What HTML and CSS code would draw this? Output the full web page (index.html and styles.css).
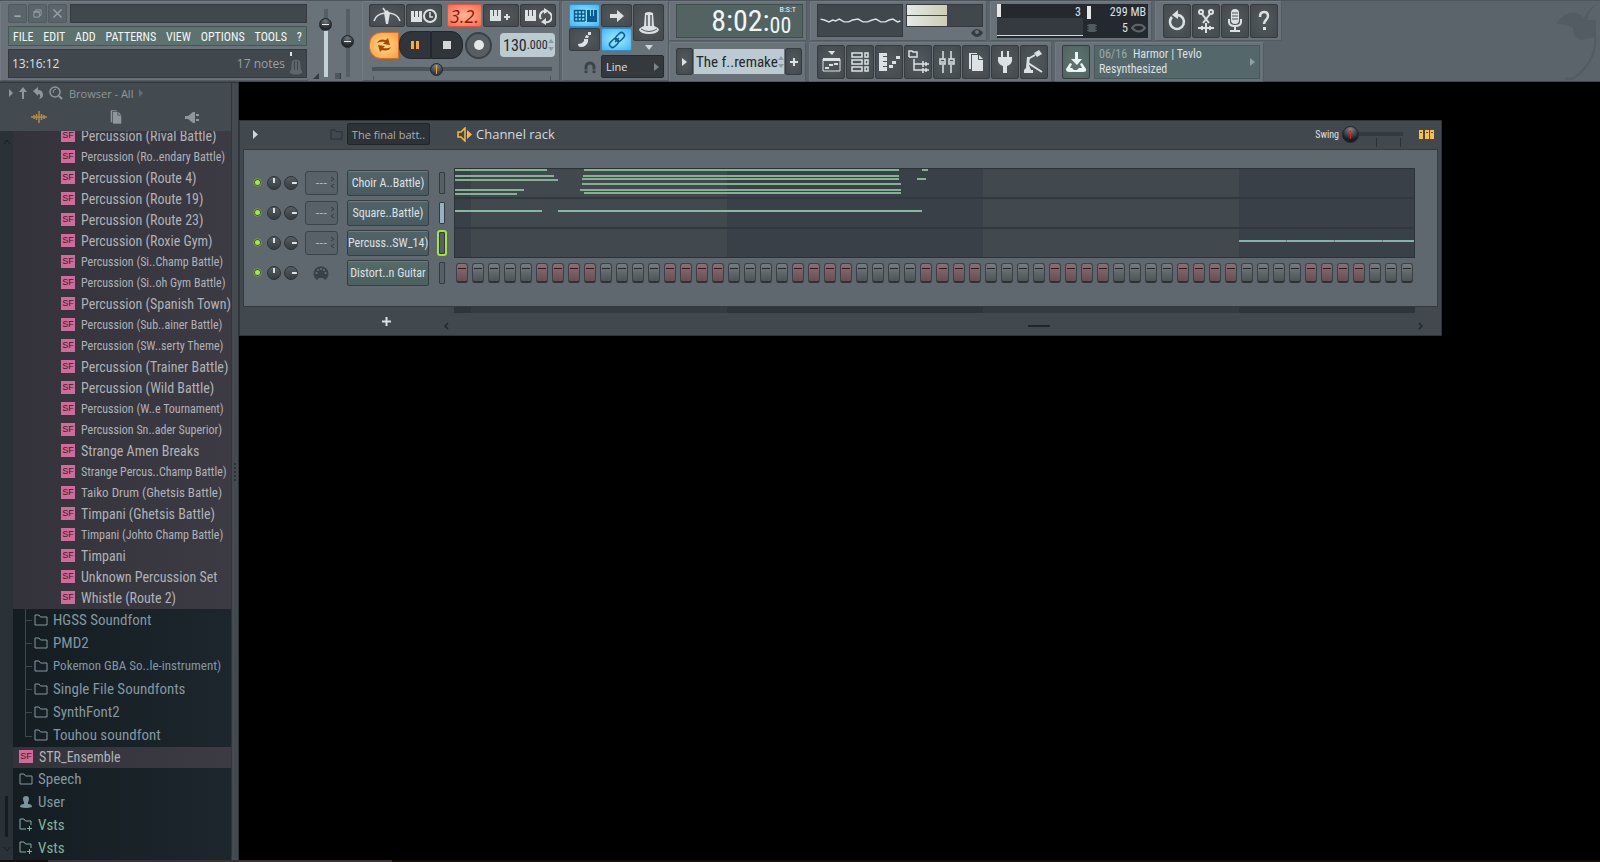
FILE: index.html
```
<!DOCTYPE html>
<html lang="en">
<head>
  <meta charset="UTF-8">
  <meta name="viewport" content="width=device-width, initial-scale=1.0">
  <title>FL Studio</title>
  <link rel="stylesheet" href="styles.css">
</head>
<body>
  <svg class="defs" aria-hidden="true">
    <symbol id="folder" viewBox="0 0 14 12">
      <path d="M1 11V1h4l1.500 2H13v8z" fill="none" stroke="currentColor"/>
    </symbol>
    <symbol id="folder-plus" viewBox="0 0 14 14">
      <path d="M7 11H1V1h4l1.500 2H12v4M10.500 8v5M8 10.500h5" fill="none" stroke="currentColor"/>
    </symbol>
    <symbol id="pages" viewBox="0 0 24 24">
      <path d="M5 19V3h8v1H7v15z"/>
      <path d="M8 5h6v5h5v11H8z"/>
      <path d="M15 5l4 4h-4z"/>
    </symbol>
    <symbol id="piano" viewBox="0 0 12 12">
      <path d="M0 0h3v6h1V0h3v6h1V0h3v11H0z"/>
    </symbol>
  </svg>

  <header class="toolbar">
    <div class="group main-group">
      <div class="title-row">
        <button class="win-button" aria-label="Minimize"><svg viewBox="0 0 19 19"><path d="M6 12.500h7" stroke="currentColor" stroke-width="2"/></svg></button>
        <button class="win-button" aria-label="Restore"><svg viewBox="0 0 19 19"><path d="M5.500 7.500h6v6h-6zM5 8h7M7.500 7V5.500h6v6H12" fill="none" stroke="currentColor"/></svg></button>
        <button class="win-button" aria-label="Close"><svg viewBox="0 0 19 19"><path d="M5 5l9 9M14 5l-9 9" stroke="currentColor" stroke-width="1.500"/></svg></button>
        <div class="title-box"></div>
      </div>
      <nav class="menu">
        <a href="#">FILE</a>
        <a href="#">EDIT</a>
        <a href="#">ADD</a>
        <a href="#">PATTERNS</a>
        <a href="#">VIEW</a>
        <a href="#">OPTIONS</a>
        <a href="#">TOOLS</a>
        <a href="#">?</a>
      </nav>
      <div class="hint">
        <span>13:16:12</span>
        <span class="hint-notes">17 notes</span>
        <svg width="14" height="24" viewBox="0 0 14 24"><path d="M1 0h2v4H1z" fill="#dfe5e6"/><path d="M3 9q4-3 8 0l1 9q2 1 1 3-6 3-12 0-1-2 1-3z" fill="#5f676d"/><path d="M5.500 9v9M8.500 9v9" stroke="#3f464c"/></svg>
      </div>
    </div>

    <div class="sliders">
      <div class="slider-box"><input type="range" class="fader fader-volume" value="84" aria-label="Main volume"><svg width="6" height="6"><path d="M6 0v6H0z" fill="#343a3f"/></svg></div>
      <div class="slider-box"><input type="range" class="fader" value="52" aria-label="Main pitch"><svg width="6" height="6"><path d="M0 1h6M0 3h6M0 5h6M5.500 0v6" stroke="#343a3f"/></svg></div>
    </div>

    <div class="group transport">
      <div class="row">
        <button class="btn" aria-label="Metronome"><svg width="28" height="18" viewBox="0 0 28 18" fill="none" stroke="currentColor" stroke-width="1.500"><path d="M1 14Q3 7 12 6M27 14Q25 7 16 6"/><path d="M14 3l3 3-2 11h-2L11 6z" fill="currentColor" stroke="none"/><path d="M14 7L10 1"/></svg></button>
        <button class="btn" aria-label="Wait for input"><svg width="28" height="18" viewBox="0 0 28 18"><use href="#piano" x="1" y="4" width="12" height="12"/><circle cx="20" cy="9" r="6" fill="#42484c" stroke="currentColor" stroke-width="2"/><path d="M20 5v5h3" fill="none" stroke="currentColor" stroke-width="1.500"/></svg></button>
        <button class="btn btn-countdown" aria-label="Countdown">3.2.</button>
        <button class="btn" aria-label="Overdub"><svg width="28" height="18" viewBox="0 0 28 18"><use href="#piano" x="3" y="3" width="12" height="12"/><path d="M20 7v6M17 10h6" stroke="currentColor" stroke-width="2"/></svg></button>
        <button class="btn" aria-label="Loop record"><svg width="28" height="18" viewBox="0 0 28 18"><use href="#piano" x="1" y="3" width="12" height="12"/><path d="M17 12a5 5 0 0 1 4-8M24 5a5 5 0 0 1-3 10" fill="none" stroke="currentColor" stroke-width="2"/><path d="M20 1l5 3-5 3zM22 11l-5 4 5 3z"/></svg></button>
      </div>
      <div class="row play-row">
        <button class="play-mode" aria-label="Pattern mode"><svg width="16" height="16" viewBox="0 0 16 16"><path d="M1 6Q3 1 10 3l2-2 2 7-7-1 2-2Q4 4 1 6zM15 10q-2 5-9 3l-2 2-2-7 7 1-2 2q5 1 8-1z" fill="#a84600"/></svg></button>
        <button class="pause" aria-label="Pause"><svg width="10" height="10"><path d="M1 1h3v8H1zM6 1h3v8H6z" fill="#ffa83c"/></svg></button>
        <button class="stop" aria-label="Stop"><svg width="8" height="8"><path d="M0 0h8v8H0z" fill="#d3d7d8"/></svg></button>
        <button class="record" aria-label="Record"><svg width="10" height="10"><circle cx="5" cy="5" r="5" fill="#e4e8e9"/></svg></button>
        <div class="tempo"><span class="tempo-main">130</span><span class="tempo-dec">.000</span><svg width="6" height="12"><path d="M0 4l3-4 3 4zM0 8l3 4 3-4z" fill="#8e9ba1"/></svg></div>
      </div>
      <input type="range" class="position" value="35" aria-label="Song position">
      <div class="position-ticks"></div>
    </div>

    <div class="group snap-group">
      <div class="snap-grid">
        <button class="btn btn-blue" aria-label="Typing keyboard"><svg width="24" height="14" viewBox="0 0 24 14"><path d="M1 1.500h11M1 5h11M1 8.500h11M1 12h11M1.500 1v11M5 1v11M8.500 1v11M12 1v11" stroke="#0d5a91" stroke-width="1.500"/><path d="M14 1h3v6h1V1h2v6h1V1h3v12H14z" fill="#0d5a91"/></svg></button>
        <button class="btn" aria-label="Step edit"><svg width="16" height="14" viewBox="0 0 16 14"><path d="M1 5h7V1l7 6-7 6V9H1z"/></svg></button>
        <button class="btn" aria-label="Note color"><svg width="18" height="18" viewBox="0 0 18 18"><path d="M2 13q4 0 6-3l0-2 4 0 0 3q-2 5-7 5-3 0-3-3z"/><path d="M9 7l1-3 3 1-1 2z"/><path d="M12 1h3v3h-3z"/></svg></button>
        <button class="btn btn-blue" aria-label="Link controllers"><svg width="18" height="18" viewBox="0 0 18 18" fill="none" stroke="#0d5a91" stroke-width="1.500"><rect x="7" y="3" width="10" height="6" rx="3" transform="rotate(-45 12 6)"/><rect x="1" y="9" width="10" height="6" rx="3" transform="rotate(-45 6 12)"/><path d="M7 11l4-4"/></svg></button>
      </div>
      <button class="btn knob-button" aria-label="Multilink"><svg width="24" height="26" viewBox="0 0 24 26"><path d="M8 3q4-2 8 0l1 13q5 2 5 4-2 4-10 4T2 20q0-2 5-4z"/><path d="M10 5v11M14 5v11" stroke="#54595d" stroke-width="1.500"/><path d="M4 19q8 5 16 0" fill="none" stroke="#54595d"/></svg></button>
      <svg class="snap-arrow" width="8" height="5"><path d="M0 0h8L4 5z" fill="#cfd4d6"/></svg>
      <div class="snap-row">
        <svg width="14" height="14" viewBox="0 0 14 14"><path d="M3 13V7a4 4 0 0 1 8 0v6" fill="none" stroke="#3d4449" stroke-width="3"/><path d="M1 10h12" stroke="#677076"/></svg>
        <button class="snap-select">Line <svg width="5" height="8"><path d="M0 0l5 4-5 4z" fill="#7d858a"/></svg></button>
      </div>
    </div>

    <div class="toolbar-right">
      <div class="toolbar-line">
        <div class="group">
          <div class="time">
            <span class="time-main">8:02:</span>
            <div class="time-side"><span class="time-mode">B:S:T</span><span class="time-sub">00</span></div>
          </div>
        </div>
        <div class="group scope-group">
          <svg class="scope" width="86" height="33" viewBox="0 0 86 33"><path d="M1 15l4 1 5 2 4-2 3 1 4-2 5 3 5 0 4-2 6-1 5 3 5 0 5-2 4-1 5 3 5 0 4-2 4-1 5 3 3-1" fill="none" stroke="#dde2e2" stroke-width="1.500"/></svg>
          <div class="meter-box">
            <div class="meter"><span></span><span></span></div>
            <svg width="12" height="10" viewBox="0 0 12 10"><path d="M0 5q6-8 12 0-6 8-12 0z" fill="#343b41"/><circle cx="6" cy="4" r="2" fill="#69727a"/></svg>
          </div>
        </div>
        <div class="group">
          <div class="cpu">
            <div class="cpu-graph"><span class="cpu-bar"></span><span>3</span></div>
            <div class="cpu-stats">
              <div class="cpu-memory"><span class="cpu-bar"></span><span>299 MB</span></div>
              <div class="cpu-voices"><svg width="10" height="8"><path d="M2 0h6v8H2zM0 1.500h10M0 4h10M0 6.500h10" fill="#525b60" stroke="#525b60"/></svg><span>5</span><svg width="15" height="10" viewBox="0 0 15 10"><path d="M1 5q3-4 6.500-3Q11 1 14 5q-6 7-13 0z" fill="none" stroke="#5c666b" stroke-width="2"/></svg></div>
            </div>
          </div>
        </div>
        <div class="group icon-row">
          <button class="btn tool" aria-label="Undo"><svg viewBox="0 0 24 24"><path d="M7 8a7 7 0 1 0 6-2" fill="none" stroke="currentColor" stroke-width="2.500"/><path d="M13 1v9L7 6z"/></svg></button>
          <button class="btn tool" aria-label="Cut"><svg viewBox="0 0 24 24" fill="none" stroke="currentColor" stroke-width="2"><path d="M8 5l7 9M16 5l-7 9"/><circle cx="7" cy="3" r="2"/><circle cx="17" cy="3" r="2"/><path d="M4 19h16M8 17v4M12 14v10M16 17v4"/></svg></button>
          <button class="btn tool" aria-label="Record audio"><svg viewBox="0 0 24 24"><rect x="8" y="0" width="8" height="15" rx="4"/><path d="M6 10v3q0 4 6 4t6-4v-3M12 17v4M7 22h10" fill="none" stroke="currentColor" stroke-width="2"/><path d="M9 4h6M9 7h6M9 10h6" stroke="#4b5155"/></svg></button>
          <button class="btn tool" aria-label="Help"><svg viewBox="0 0 24 24"><path d="M8 8q0-5 4-5t4 4q0 2-2 4t-2 4" fill="none" stroke="currentColor" stroke-width="2.500"/><path d="M11 18h3v3h-3z"/></svg></button>
        </div>
      </div>
      <div class="toolbar-line">
        <div class="group pattern-group">
          <button class="btn pattern-button" aria-label="Pattern menu"><svg width="5" height="8"><path d="M0 0l5 4-5 4z"/></svg></button>
          <div class="pattern-name"><span>The f..remake</span><svg width="6" height="12"><path d="M0 4l3-4 3 4zM0 8l3 4 3-4z" fill="#8e9ba1"/></svg></div>
          <button class="btn pattern-button" aria-label="Add pattern"><svg width="8" height="8"><path d="M4 0v8M0 4h8" stroke="currentColor" stroke-width="2"/></svg></button>
        </div>
        <div class="group icon-row">
          <button class="btn tool" aria-label="Playlist"><svg viewBox="0 0 24 24"><path d="M9 1h7l-3 4z"/><path d="M4 9h17v12H4z" fill="none" stroke="currentColor"/><path d="M4 8h17v3H4zM6 17h4v2H6zM10 14h4v2h-4zM15 13h4v2h-4z"/></svg></button>
          <button class="btn tool" aria-label="Channel rack"><svg viewBox="0 0 24 24" fill="none" stroke="currentColor" stroke-width="1.500"><path d="M4 3h10v4H4zM4 10h10v4H4zM4 17h10v4H4zM17 3h3v4h-3zM17 10h3v4h-3zM17 17h3v4h-3z"/></svg></button>
          <button class="btn tool" aria-label="Piano roll"><svg viewBox="0 0 24 24"><path d="M2 3h8v3H6v1h4v4H6v1h4v4H6v1h4v4H2zM12 15h4v3h-4zM15 11h4v3h-4zM19 6h4v3h-4z"/></svg></button>
          <button class="btn tool" aria-label="Browser"><svg viewBox="0 0 24 24"><path d="M3 7V1h3l1 1h4v5H3M8 9v11h6M8 14h6" fill="none" stroke="currentColor" stroke-width="1.500"/><path d="M14 14h9M14 20h9M17 11v6M20 12v4M17 18v5M20 18v4" stroke="currentColor" stroke-width="1.500"/></svg></button>
          <button class="btn tool" aria-label="Mixer"><svg viewBox="0 0 24 24" fill="none" stroke="currentColor" stroke-width="1.500"><path d="M8 1v8M8 15v8M16 1v8M16 15v8M5 9h5v5H5zM14 9h5v5h-5zM6 12h3M15 12h3"/></svg></button>
          <button class="btn tool" aria-label="Project files"><svg><use href="#pages"/></svg></button>
          <button class="btn tool" aria-label="Plugins"><svg viewBox="0 0 24 24"><path d="M8 1h2v6h4V1h2v6h3v4q-1 4-5 5v7h-4v-7q-4-1-5-5V7h3z"/></svg></button>
          <button class="btn tool" aria-label="Tempo tapper"><svg viewBox="0 0 24 24"><path d="M12 3l5-3 3 4-5 3z"/><path d="M13 5L6 9M6 13l14 9" fill="none" stroke="currentColor" stroke-width="2"/><path d="M5 7h3l-1 8 2 5h2v3H2v-3l2-2z"/></svg></button>
        </div>
        <div class="group news-group">
          <button class="btn tool tool-green" aria-label="Download"><svg viewBox="0 0 24 24"><path d="M11 2h3v7h4l-5 6-6-6h4z"/><path d="M6 13l-4 6q0 3 3 3h14q4 0 3-3l-4-6-2 1 2 4h-3l-2 2h-3l-2-2H6l2-4z"/></svg></button>
          <div class="news">
            <p><span class="news-date">06/16</span> Harmor | Tevlo<br>Resynthesized</p>
            <svg width="5" height="8"><path d="M0 0l5 4-5 4z" fill="#8fa09f"/></svg>
          </div>
        </div>
      </div>
    </div>
    <svg class="logo" width="46" height="80" viewBox="0 0 46 80"><path d="M3 22Q10 10 22 12q6 1 8 6Q34 6 43 3q-9 8-10 16h9v17q-8 1-14 3-9-1-9-12-7-4-16-4z" fill="#535c62"/><path d="M41 36q2 18-12 33-10 12-18 8" fill="none" stroke="#535c62" stroke-width="2"/></svg>
  </header>

  <main class="desktop">
    <aside class="browser">
      <div class="browser-main">
        <div class="browser-head">
          <div class="browser-path">
            <svg width="4" height="8"><path d="M0 0l4 4-4 4z"/></svg>
            <svg width="8" height="12"><path d="M4 0l4 5H5v7H3V5H0z"/></svg>
            <svg width="10" height="12"><path d="M0 4l5-4v3q5 0 5 5 0 3-4 4 2-2 1-4 0-1-2-1v2z"/></svg>
            <svg width="14" height="14" fill="none" stroke="currentColor"><circle cx="6" cy="6" r="5" stroke-width="1.500"/><path d="M10 10l3 3" stroke-width="2"/><path d="M4 7q0-4 3-4"/></svg>
            <span>Browser - All</span>
            <svg width="4" height="8"><path d="M0 0l4 4-4 4z" fill="#656d72"/></svg>
          </div>
          <div class="browser-tabs">
            <button aria-label="All"><svg width="16" height="14" viewBox="0 0 16 14"><path d="M0 7h16M3 5v4M5.500 4v6M8 1v12M10.500 4v6M13 5v4" stroke="#b08d43" stroke-width="1.500"/></svg></button>
            <button aria-label="Current project"><svg width="18" height="18"><use href="#pages"/></svg></button>
            <button aria-label="Plugin database"><svg width="16" height="12" viewBox="0 0 16 12"><path d="M0 5h3l5-4h2v11H8L3 8H0zM11 3h3v2h-3zM11 8h3v2h-3z"/></svg></button>
          </div>
        </div>
        <div class="browser-body">
          <div class="scroll-col">
            <svg width="8" height="5"><path d="M1 5l3-4 3 4" fill="none" stroke="#171f24"/></svg>
            <span class="scroll-thumb"></span>
            <svg width="8" height="5"><path d="M1 0l3 4 3-4" fill="none" stroke="#171f24"/></svg>
          </div>
          <ul class="files">
            <li class="sf">Percussion (Rival Battle)</li>
            <li class="sf long">Percussion (Ro..endary Battle)</li>
            <li class="sf">Percussion (Route 4)</li>
            <li class="sf">Percussion (Route 19)</li>
            <li class="sf">Percussion (Route 23)</li>
            <li class="sf">Percussion (Roxie Gym)</li>
            <li class="sf long">Percussion (Si..Champ Battle)</li>
            <li class="sf long">Percussion (Si..oh Gym Battle)</li>
            <li class="sf">Percussion (Spanish Town)</li>
            <li class="sf long">Percussion (Sub..ainer Battle)</li>
            <li class="sf long">Percussion (SW..serty Theme)</li>
            <li class="sf">Percussion (Trainer Battle)</li>
            <li class="sf">Percussion (Wild Battle)</li>
            <li class="sf long">Percussion (W..e Tournament)</li>
            <li class="sf long">Percussion Sn..ader Superior)</li>
            <li class="sf">Strange Amen Breaks</li>
            <li class="sf long">Strange Percus..Champ Battle)</li>
            <li class="sf medium">Taiko Drum (Ghetsis Battle)</li>
            <li class="sf">Timpani (Ghetsis Battle)</li>
            <li class="sf long">Timpani (Johto Champ Battle)</li>
            <li class="sf">Timpani</li>
            <li class="sf">Unknown Percussion Set</li>
            <li class="sf">Whistle (Route 2)</li>
            <li class="dir child"><svg><use href="#folder"/></svg>HGSS Soundfont</li>
            <li class="dir child"><svg><use href="#folder"/></svg>PMD2</li>
            <li class="dir child medium"><svg><use href="#folder"/></svg>Pokemon GBA So..le-instrument)</li>
            <li class="dir child"><svg><use href="#folder"/></svg>Single File Soundfonts</li>
            <li class="dir child"><svg><use href="#folder"/></svg>SynthFont2</li>
            <li class="dir child"><svg><use href="#folder"/></svg>Touhou soundfont</li>
            <li class="sf sf-root">STR_Ensemble</li>
            <li class="dir"><svg><use href="#folder"/></svg>Speech</li>
            <li class="dir"><svg viewBox="0 0 14 12"><path d="M7 0q3 0 3 3 0 2-1 3v2q4 0 4 3-6 2-12 0 0-3 4-3V6Q4 5 4 3q0-3 3-3z" fill="#7b939c"/></svg>User</li>
            <li class="dir vst"><svg><use href="#folder-plus"/></svg>Vsts</li>
            <li class="dir vst"><svg><use href="#folder-plus"/></svg>Vsts</li>
          </ul>
        </div>
      </div>
      <div class="browser-grip"><span></span></div>
    </aside>

    <section class="rack">
      <div class="rack-head">
        <svg class="rack-arrow" width="5" height="9"><path d="M0 0l5 4.500L0 9z" fill="#d2d7d9"/></svg>
        <svg class="rack-folder" width="13" height="11"><use href="#folder"/></svg>
        <button class="rack-filter">The final batt..</button>
        <svg class="rack-speaker" width="15" height="15" viewBox="0 0 15 15"><path d="M1 5h3l4-4v13l-4-4H1z" fill="none" stroke="#fdb933" stroke-width="1.500"/><path d="M10 3l5 4.500-5 4.500z" fill="#fdb933"/></svg>
        <h1>Channel rack</h1>
        <label for="swing">Swing</label>
        <input type="range" id="swing" class="swing" value="0">
        <svg width="16" height="9"><path d="M0 0h4v9H0zM6 0h4v9H6zM11 0h4v9h-4z" fill="#fdc040"/><path d="M1 2.500h2M7 2.500h2M12 2.500h2" stroke="#5a4a20"/></svg>
      </div>
      <div class="rack-body">
        <div class="channels">
          <div class="channel">
            <span class="led"></span><span class="knob"></span><span class="knob knob-vol"></span>
            <span class="track">---<svg width="5" height="13"><path d="M1 1l3 2-3 2M4 8l-3 2 3 2" fill="none" stroke="#363d42"/></svg></span>
            <button class="channel-name">Choir A..Battle)</button><span class="select"></span>
          </div>
          <div class="channel">
            <span class="led"></span><span class="knob"></span><span class="knob knob-vol"></span>
            <span class="track">---<svg width="5" height="13"><path d="M1 1l3 2-3 2M4 8l-3 2 3 2" fill="none" stroke="#363d42"/></svg></span>
            <button class="channel-name">Square..Battle)</button><span class="select select-peak"></span>
          </div>
          <div class="channel">
            <span class="led"></span><span class="knob"></span><span class="knob knob-vol"></span>
            <span class="track">---<svg width="5" height="13"><path d="M1 1l3 2-3 2M4 8l-3 2 3 2" fill="none" stroke="#363d42"/></svg></span>
            <button class="channel-name">Percuss..SW_14)</button><span class="select select-on"></span>
          </div>
          <div class="channel">
            <span class="led"></span><span class="knob"></span><span class="knob knob-vol"></span>
            <span class="track track-midi"><svg width="16" height="14" viewBox="0 0 16 14"><path d="M4 14a7.500 7.500 0 1 1 8 0l-2-2H6z" fill="#3a4146"/><g fill="#687177"><circle cx="3.500" cy="7" r="1"/><circle cx="5" cy="4" r="1"/><circle cx="8" cy="3" r="1"/><circle cx="11" cy="4" r="1"/><circle cx="12.500" cy="7" r="1"/></g></svg></span>
            <button class="channel-name channel-green">Distort..n Guitar</button><span class="select"></span>
          </div>
        </div>
        <div class="patterns">
          <svg class="notes" viewBox="0 0 961 90" preserveAspectRatio="none">
            <path d="M0 0h961v90H0z" fill="#394047"/>
            <path d="M17 0h256v90H17zM529 0h256v90H529z" fill="#41484e"/>
            <path d="M0 30h961M0 60h961" stroke="#31383e" stroke-width="2"/>
            <path d="M0 2h93M0 8h100M0 12h104M0 22h70M0 26h63M130 2h315M129 8h316M128 11h317M128 16h319M126 22h321M130 25h317M468 2h6M463 11h9" stroke="#86b190" stroke-width="2"/>
            <path d="M0 43h88M104 43h364" stroke="#86b7a3" stroke-width="2"/>
            <path d="M785 73h47M833 73h47M881 73h47M929 73h32" stroke="#83b3aa" stroke-width="2"/>
            <path d="M785 73h176" stroke="#83b3aa" stroke-width="2" opacity=".6"/>
            <path d="M.500 0v90M0 .500h961M960.500 0v90M0 89.500h961" stroke="#2c3338"/>
          </svg>
          <div class="steps" id="steps"></div>
        </div>
      </div>
      <div class="rack-foot">
        <button class="rack-add" aria-label="Add channel"><svg width="9" height="9"><path d="M4.500 0v9M0 4.500h9" stroke="#dde1e2" stroke-width="2"/></svg></button>
        <div class="rack-scroll">
          <div class="strip"></div>
          <div class="scroll-line">
            <svg width="5" height="8"><path d="M4 1L1 4l3 3" fill="none" stroke="#20272c" stroke-width="1.500"/></svg>
            <span class="scroll-handle"></span>
            <svg width="5" height="8"><path d="M1 1l3 3-3 3" fill="none" stroke="#20272c" stroke-width="1.500"/></svg>
          </div>
        </div>
      </div>
    </section>
  </main>
  <footer class="edge"></footer>

  <script>
    const steps = document.getElementById('steps');

    // 60 visible steps, the beats alternate in colour every four steps
    for (let i = 0; i < 60; i++) {
      const step = document.createElement('button');
      step.className = (i + 3) % 8 < 4 ? 'step step-red' : 'step';
      step.setAttribute('aria-label', 'Step ' + (i + 1));
      steps.appendChild(step);
    }
  </script>
</body>
</html>
```

FILE: styles.css
```
* {
  box-sizing: border-box;
}

body {
  font-family: "Open Sans", "Noto Sans", sans-serif;
  font-size: 12px;
  margin: 0;
  height: 100vh;
  display: flex;
  flex-direction: column;
  overflow: hidden;
  background-color: #000;
  color: #dce1e3;
}

button {
  font-family: inherit;
  color: inherit;
  margin: 0;
  padding: 0;
  border: none;
  background: none;
  cursor: pointer;
}

svg {
  display: block;
  flex: none;
  fill: currentColor;
}

svg[fill="none"] {
  fill: none;
}

.defs {
  position: absolute;
  width: 0;
  height: 0;
}

/* Narrow interface text */
.menu,
.tempo,
.pattern-name,
.time,
.cpu,
.news,
.files,
.rack-head label,
.channel-name {
  font-family: "Roboto Condensed", Roboto, sans-serif;
}

/* Toolbar */
.toolbar {
  display: flex;
  background-color: #5b646a;
  border-top: 1px solid #4c555c;
  border-bottom: 1px solid #434b51;
  height: 82px;
  flex: none;
}

.group {
  background-color: #697279;
  border: 1px solid #727b81;
  border-right-color: #525b61;
  border-bottom-color: #525b61;
  border-radius: 2px;
  padding: 2px 3px 2px 6px;
}

.main-group {
  width: 308px;
  border-right: none;
  padding: 2px 1px 2px 7px;
  display: flex;
  flex-direction: column;
  gap: 3px;
}

.title-row {
  display: flex;
  gap: 1px;
  height: 19px;
}

.win-button {
  width: 19px;
  height: 19px;
  border-radius: 2px;
  background-color: #5b646a;
  border: 1px solid #525a60;
  color: #9aa3a8;
}

.title-box {
  flex: 1;
  margin-left: 2px;
  background-color: #40474d;
  border: 1px solid #343a40;
}

.menu {
  display: flex;
  justify-content: space-between;
  align-items: center;
  height: 20px;
  padding: 1px 4px 0;
  background-color: #5d716f;
  border: 1px solid #465856;
}

.menu a {
  font-size: 12px;
  color: #f2f7f6;
  text-decoration: none;
}

.hint {
  display: flex;
  align-items: center;
  flex: 1;
  padding: 0 3px;
  background-color: #40474d;
  border: 1px solid #343a40;
}

.hint-notes {
  margin-left: auto;
  margin-right: 4px;
  color: #98a0a5;
}

.sliders {
  display: flex;
  gap: 1px;
  width: 54px;
  padding: 6px 3px 2px 5px;
  background-color: #697279;
}

.slider-box {
  display: flex;
  align-items: flex-end;
  width: 21px;
}

.slider-box svg {
  order: -1;
}

.fader {
  appearance: none;
  writing-mode: vertical-lr;
  direction: rtl;
  width: 13px;
  height: 68px;
  margin: 0 0 2px 0;
  background: linear-gradient(#555e64, #555e64) center / 4px 100% no-repeat;
}

.fader-volume {
  background: linear-gradient(#555e64 25%, #c3d2d8 25%) center / 4px 100% no-repeat;
}

.fader::-webkit-slider-thumb,
.position::-webkit-slider-thumb,
.swing::-webkit-slider-thumb {
  appearance: none;
  width: 13px;
  height: 13px;
  border-radius: 50%;
  border: 1px solid #20262a;
  background: linear-gradient(#e8ecee, #e8ecee) center / 7px 1px no-repeat, radial-gradient(circle at 50% 20%, #6d767b, #23292d 70%);
}

.position::-webkit-slider-thumb {
  background: linear-gradient(#f29a3a, #f29a3a) center / 1px 9px no-repeat, radial-gradient(circle at 50% 20%, #7b8489, #343b40 70%);
}

/* Buttons */
.btn {
  display: flex;
  align-items: center;
  justify-content: center;
  background: radial-gradient(#535a5e, #43494d);
  border: 1px solid #363c40;
  border-radius: 2px;
  color: #dce2e4;
}

.btn-countdown {
  margin-left: 4px;
  background: radial-gradient(#ffb59c, #f9694c);
  border-color: #e0543a;
  color: #8c1606;
  font-size: 18px;
  font-style: italic;
}

.btn-blue {
  background: radial-gradient(#a5f0ff, #41b4f5);
  border-color: #2c8fd0;
}

.row {
  display: flex;
  align-items: center;
  gap: 1px;
}

.transport {
  width: 198px;
}

.transport .btn {
  width: 36px;
  height: 23px;
}

.play-row {
  margin-top: 4px;
  gap: 0;
}

.play-row > * {
  flex: none;
}

.play-mode {
  width: 30px;
  height: 27px;
  padding-left: 6px;
  border-radius: 12px 0 0 12px;
  border: 1px solid #d56d20;
  background: radial-gradient(#ffdf94, #ff9a38);
}

.pause,
.stop {
  display: flex;
  align-items: center;
  justify-content: center;
  width: 32px;
  height: 28px;
  background-color: #2f353a;
  border: 1px solid #22272b;
}

.pause {
  border-radius: 12px 0 0 12px;
}

.stop {
  border-radius: 0 12px 12px 0;
}

.record {
  display: flex;
  align-items: center;
  justify-content: center;
  width: 27px;
  height: 27px;
  margin-left: 2px;
  border-radius: 50%;
  background-color: #575f64;
  border: 2px solid #3a4146;
}

.tempo,
.pattern-name {
  display: flex;
  align-items: center;
  background-color: #bccad1;
  color: #22292d;
}

.tempo {
  width: 55px;
  height: 24px;
  margin-left: 8px;
  padding: 0 2px 0 3px;
  border-radius: 4px;
}

.tempo-main {
  font-size: 16px;
}

.tempo-dec {
  font-size: 12px;
  flex: 1;
}

.position,
.swing {
  appearance: none;
  height: 14px;
  background: linear-gradient(#4b545a, #4b545a) center / 100% 4px no-repeat;
}

.position {
  display: block;
  width: 180px;
  margin: 3px 0 0 3px;
}

.position-ticks {
  width: 178px;
  height: 5px;
  margin-left: 4px;
  border: solid #4b545a;
  border-width: 0 1px;
}

.snap-group {
  display: grid;
  grid-template-columns: 63px 31px;
  grid-template-rows: 48px 26px;
  column-gap: 1px;
  width: 107px;
  margin-left: 2px;
}

.snap-grid {
  display: grid;
  grid-template-columns: 31px 31px;
  grid-auto-rows: 23px;
  gap: 1px;
}

.knob-button {
  grid-area: 1 / 2;
  align-self: start;
  height: 37px;
}

/* shares the cell of the knob button, at its foot */
.snap-arrow {
  grid-area: 1 / 2;
  align-self: end;
  justify-self: center;
  margin-bottom: 2px;
}

.snap-row {
  grid-column: 1 / 3;
  display: flex;
  align-items: center;
  justify-content: flex-end;
  gap: 4px;
  padding-top: 3px;
}

.snap-select {
  display: flex;
  align-items: center;
  justify-content: space-between;
  width: 63px;
  height: 23px;
  padding: 0 4px;
  font-size: 11px;
  background-color: #33393d;
  border: 1px solid #262c30;
  border-radius: 2px;
}

.toolbar-line {
  display: flex;
  gap: 3px;
  height: 41px;
}

.toolbar-line .group {
  height: 40px;
}

.time {
  display: flex;
  align-items: flex-end;
  justify-content: flex-end;
  width: 127px;
  height: 34px;
  padding-right: 6px;
  background-color: #526362;
  border: 1px solid #3e4c4b;
  color: #eef6f6;
}

.time-main {
  font-size: 30px;
  line-height: 32px;
}

.time-side {
  display: flex;
  flex-direction: column;
  align-items: flex-start;
}

.time-sub {
  font-size: 22px;
  line-height: 23px;
}

.time-mode {
  margin-left: 10px;
  font-size: 8px;
  line-height: 9px;
}

.scope-group {
  display: flex;
  gap: 3px;
}

.scope {
  background-color: #40474d;
  border: 1px solid #343a40;
}

.meter-box {
  display: flex;
  flex-direction: column;
  align-items: flex-end;
  justify-content: space-between;
}

.meter {
  display: flex;
  flex-direction: column;
  gap: 1px;
  width: 77px;
  height: 23px;
  background-color: #40474d;
  border: 1px solid #343a40;
}

.meter span {
  flex: 1;
  width: 40px;
  background: linear-gradient(90deg, #e4e8e8, #cdceb3);
}

.cpu {
  display: flex;
  width: 151px;
  height: 34px;
  font-size: 12px;
  line-height: 16px;
  background-color: #24292f;
}

.cpu-graph {
  display: flex;
  justify-content: space-between;
  width: 86px;
  height: 32px;
  padding-right: 2px;
  background: linear-gradient(#24292f 14px, #343a40 14px);
  border-bottom: 1px solid #d3d8d8;
}

.cpu-bar {
  width: 4px;
  height: 13px;
  background-color: #e5e8e8;
}

.cpu-stats {
  flex: 1;
  padding: 0 2px 0 4px;
}

.cpu-memory,
.cpu-voices {
  display: flex;
  align-items: center;
  justify-content: space-between;
}

.cpu-voices span {
  flex: 1;
  padding-right: 3px;
  text-align: right;
}

.icon-row,
.pattern-group,
.news-group {
  display: flex;
  gap: 1px;
}

.icon-row {
  padding-left: 7px;
}

.tool {
  width: 28px;
  height: 34px;
}

.tool svg {
  width: 24px;
  height: 24px;
}

.tool-green {
  background: radial-gradient(#5f7572, #506361);
  color: #eaf5f3;
}

.pattern-group {
  width: 137px;
}

.pattern-button {
  flex: none;
  width: 17px;
  height: 27px;
  margin-top: 3px;
}

.pattern-name {
  flex: 1;
  min-width: 0;
  height: 25px;
  margin-top: 4px;
  padding: 0 1px 0 2px;
  justify-content: space-between;
  font-size: 15px;
  white-space: nowrap;
}

.news-group {
  gap: 4px;
}

.news {
  display: flex;
  align-items: center;
  justify-content: space-between;
  width: 166px;
  height: 34px;
  padding: 0 4px;
  background-color: #54676a;
  border: 1px solid #46585a;
  font-size: 12px;
  line-height: 15px;
}

.news p {
  margin: 0;
}

.news-date {
  margin-right: 3px;
  color: #9aa9a9;
}

.logo {
  margin-left: auto;
}

/* Browser */
.desktop {
  flex: 1;
  display: flex;
  min-height: 0;
}

.browser {
  display: flex;
  width: 239px;
  flex: none;
}

.browser-main {
  flex: 1;
  display: flex;
  flex-direction: column;
  min-width: 0;
}

.browser-head {
  height: 49px;
  flex: none;
  padding-top: 2px;
  background-color: #434b50;
  border-top: 1px solid #343b40;
  color: #8f979b;
}

.browser-path {
  display: flex;
  align-items: center;
  gap: 6px;
  height: 16px;
  padding-left: 9px;
}

.browser-path span {
  font-size: 11px;
}

.browser-tabs {
  display: flex;
  align-items: center;
  height: 31px;
}

.browser-tabs button {
  flex: 1;
  display: flex;
  justify-content: center;
}

.browser-body {
  flex: 1;
  display: flex;
  min-height: 0;
}

.scroll-col {
  display: flex;
  flex-direction: column;
  align-items: center;
  width: 13px;
  padding: 8px 0;
  background-color: #2a3137;
}

.scroll-thumb {
  width: 3px;
  height: 41px;
  margin-top: auto;
  margin-bottom: 10px;
  background-color: #161c20;
}

.files {
  flex: 1;
  display: flex;
  flex-direction: column;
  justify-content: flex-end;
  margin: 0;
  padding: 0;
  overflow: hidden;
  list-style: none;
  background: linear-gradient(90deg, #141d22, #1d262c);
  font-size: 14px;
  white-space: nowrap;
}

.files li {
  display: flex;
  align-items: center;
  flex: none;
  padding-bottom: 2px;
}

.files svg {
  width: 14px;
  height: 14px;
  margin-right: 5px;
}

.sf {
  height: 21px;
  padding-left: 48px;
  background: linear-gradient(90deg, #34333b, #3c3a43);
  color: #b0b2b7;
}

.sf::before {
  content: "SF";
  flex: none;
  width: 14px;
  height: 13px;
  margin-right: 6px;
  background-color: #cf6a9b;
  color: #33202b;
  font-family: "Liberation Sans", sans-serif;
  font-size: 9px;
  line-height: 13px;
  text-align: center;
}

.files .sf-root {
  padding-left: 6px;
}

.dir {
  height: 23px;
  padding-left: 6px;
  color: #8497a0;
  font-size: 15px;
}

/* longer names are set smaller to fit the panel */
.files .medium {
  font-size: 13px;
}

.files .long {
  font-size: 12px;
}

/* tree line in front of nested folders */
.child::before {
  content: "";
  flex: none;
  align-self: flex-start;
  width: 6px;
  height: 12px;
  margin: 0 2px 0 6px;
  border: solid #3d484e;
  border-width: 0 0 1px 1px;
}

.child:has(+ .child)::before {
  height: 23px;
  border-bottom: none;
  background: linear-gradient(#3d484e, #3d484e) 0 11px / 6px 1px no-repeat;
}

.vst {
  color: #83b39b;
}

.browser-grip {
  display: flex;
  align-items: center;
  justify-content: center;
  width: 8px;
  background-color: #434b50;
  border: 1px solid #30373c;
  border-width: 1px 1px 0 1px;
}

.browser-grip span {
  height: 18px;
  border-left: 2px dotted #2b3136;
}

/* Channel rack */
.rack {
  flex: 1;
  align-self: flex-start;
  min-width: 0;
  margin: 38px 158px 0 0;
  background-color: #41484e;
  border: 1px solid #2d3439;
}

.rack-head {
  display: flex;
  align-items: center;
  height: 28px;
  padding: 0 6px 2px 13px;
}

.rack-arrow {
  margin-right: 72px;
}

.rack-folder {
  margin-right: 4px;
  color: #2a3035;
}

.rack-filter {
  width: 83px;
  height: 22px;
  font-size: 11px;
  background-color: #2c3236;
  border: 1px solid #20262a;
  border-radius: 2px;
  color: #a9b0b3;
}

.rack-speaker {
  margin: 0 4px 0 27px;
}

.rack-head h1 {
  flex: 1;
  margin: 0;
  font-size: 13px;
  font-weight: normal;
  color: #d4d9db;
}

.rack-head label {
  font-size: 10px;
}

.swing {
  width: 61px;
  height: 25px;
  margin: 0 16px 0 3px;
  background:
    linear-gradient(#343b40, #343b40) center / 100% 4px no-repeat,
    linear-gradient(#2a3136, #2a3136) 34px 100% / 1px 9px no-repeat,
    linear-gradient(#2a3136, #2a3136) 58px 100% / 1px 9px no-repeat;
}

.swing::-webkit-slider-thumb {
  width: 17px;
  height: 17px;
  background: linear-gradient(#e02020, #e02020) center / 1px 9px no-repeat, radial-gradient(circle at 50% 15%, #7b8489, #191e21 70%);
}

.rack-body {
  display: flex;
  margin: 0 3px;
  padding: 18px 22px 18px 9px;
  background-color: #5f686e;
  border: 1px solid #343b40;
}

.channels {
  width: 201px;
  flex: none;
}

.channel {
  display: flex;
  align-items: center;
  height: 30px;
  padding-bottom: 1px;
}

.channel > * {
  flex: none;
}

.led {
  width: 9px;
  height: 9px;
  border-radius: 50%;
  background-color: #a4ea4c;
  border: 2px solid #3d5a20;
  outline: 1px solid #8b9479;
  outline-offset: -1px;
}

.knob {
  width: 14px;
  height: 14px;
  margin-left: 5px;
  border-radius: 50%;
  border: 1px solid #2c3236;
  background: linear-gradient(#dce1e3, #dce1e3) 50% 1px / 2px 5px no-repeat, linear-gradient(#555d62, #373e43);
}

.knob-vol {
  margin-left: 3px;
  background: linear-gradient(#dce1e3, #dce1e3) 100% 50% / 5px 2px no-repeat, linear-gradient(#555d62, #373e43);
}

.track {
  display: flex;
  align-items: center;
  justify-content: flex-end;
  gap: 3px;
  width: 33px;
  height: 24px;
  margin-left: 7px;
  padding-right: 2px;
  border: 1px solid #3c4348;
  border-radius: 3px;
  background-color: #586167;
  color: #b2b9bc;
}

.track-midi {
  justify-content: center;
  border: none;
  background: none;
}

.channel-name {
  width: 82px;
  height: 26px;
  margin-left: 9px;
  font-size: 12px;
  white-space: nowrap;
  background: linear-gradient(#536469, #495a60);
  border: 1px solid #343f44;
  border-radius: 2px;
  box-shadow: inset 0 1px #6b7b80;
}

.channel-green {
  background: linear-gradient(#566b69, #4b605f);
}

.select {
  width: 6px;
  height: 22px;
  margin-left: 10px;
  border: 1px solid #343b40;
  border-radius: 1px;
  background-color: #566065;
}

.select-peak {
  background-color: #93b3c0;
}

.select-on {
  outline: 2px solid #a4e53a;
}

.patterns {
  flex: 1;
  min-width: 0;
}

.notes {
  width: 100%;
  height: 90px;
}

.steps {
  display: grid;
  grid-template-columns: repeat(60, 1fr);
  height: 30px;
  align-items: center;
}

.step {
  height: 20px;
  margin: 0 2px;
  border-radius: 3px;
  border: 1px solid #3a4145;
  border-bottom: 2px solid #2c3236;
  background: linear-gradient(#23282b, #23282b) 50% 4px / 8px 1px no-repeat, linear-gradient(#767c80, #4d5458);
}

.step-red {
  background: linear-gradient(#33191a, #33191a) 50% 4px / 8px 1px no-repeat, linear-gradient(#8b7072, #674e51);
}

.rack-foot {
  display: flex;
  height: 28px;
}

.rack-add {
  width: 9px;
  margin-left: 142px;
}

.rack-scroll {
  flex: 1;
  margin: 0 18px 0 53px;
}

.strip {
  height: 6px;
  margin: 0 8px 0 10px;
  background: linear-gradient(90deg, #2e353b 17px, #353c42 17px 28.400%, #2e353b 28.400% 55%, #353c42 55% 81.700%, #2e353b 81.700%);
}

.scroll-line {
  display: flex;
  align-items: center;
  justify-content: space-between;
  height: 20px;
  padding-top: 6px;
}

.scroll-handle {
  width: 22px;
  height: 2px;
  margin-left: 210px;
  background-color: #20272c;
}

.edge {
  height: 2px;
  flex: none;
  background: linear-gradient(90deg, #1a0f08 48px, #383334 48px 392px, #150d09 392px);
}
```
